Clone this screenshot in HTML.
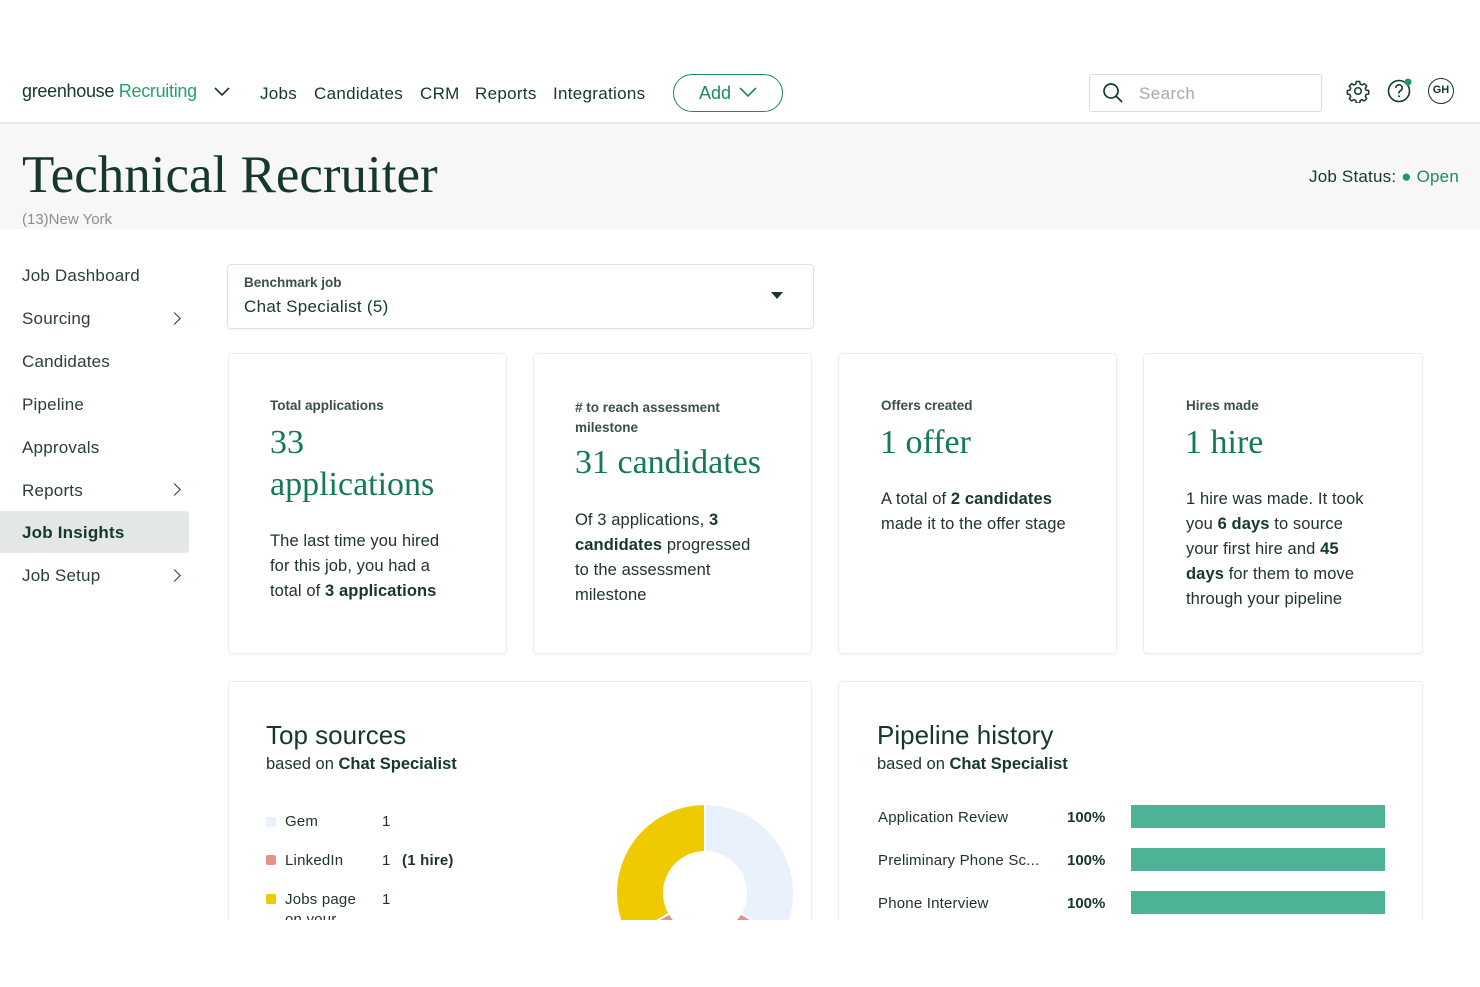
<!DOCTYPE html>
<html><head><meta charset="utf-8"><style>
*{margin:0;padding:0;box-sizing:border-box}
body{width:1480px;height:987px;background:#fff;font-family:"Liberation Sans",sans-serif;color:#15372c;position:relative;overflow:hidden}
.a{position:absolute;white-space:nowrap}
.serif{font-family:"Liberation Serif",serif}
.nav{font-size:17px;color:#15372c;top:84px;letter-spacing:.3px}
.side{left:22px;font-size:17px;color:#2c3e36;letter-spacing:.2px}
.chev{position:absolute;left:170px;width:9px;height:9px;border-right:1.8px solid #2c3e36;border-top:1.8px solid #2c3e36;transform:rotate(45deg)}
.card{position:absolute;background:#fff;border:1px solid #ececec;border-radius:4px;box-shadow:0 1px 2px rgba(0,0,0,.04)}
.lbl{font-size:13.5px;font-weight:bold;color:#3d4f47}
.big{font-family:"Liberation Serif",serif;font-size:34px;color:#137a52;line-height:42px}
.txt{font-size:16.5px;line-height:25px;color:#22332c;letter-spacing:.1px}
b{font-weight:bold;color:#15372c}
.bar{position:absolute;left:1131px;width:254px;height:23px;background:#4db396}
.pl{font-size:15px;color:#22332c;letter-spacing:.2px}
.pp{font-size:15px;font-weight:bold;left:1067px}
</style></head><body>
<div class="a" style="left:22px;top:81px;font-size:18px;color:#15372c;letter-spacing:-.3px">greenhouse <span style="color:#27a06f">Recruiting</span></div>
<svg class="a" style="left:213px;top:86px" width="18" height="12"><path d="M2 2l7 7 7-7" fill="none" stroke="#15372c" stroke-width="1.6"/></svg>
<div class="a nav" style="left:260px">Jobs</div>
<div class="a nav" style="left:314px">Candidates</div>
<div class="a nav" style="left:420px">CRM</div>
<div class="a nav" style="left:475px">Reports</div>
<div class="a nav" style="left:553px">Integrations</div>
<div class="a" style="left:673px;top:74px;width:110px;height:38px;border:1.5px solid #1e8a5e;border-radius:19px"></div>
<div class="a" style="left:699px;top:83px;font-size:18px;color:#1e8a5e">Add</div>
<svg class="a" style="left:738px;top:86px" width="20" height="12"><path d="M2 2l8 8 8-8" fill="none" stroke="#1e8a5e" stroke-width="1.6"/></svg>
<div class="a" style="left:1089px;top:74px;width:233px;height:38px;border:1px solid #dcdcdc;border-radius:3px"></div>
<svg class="a" style="left:1102px;top:82px" width="22" height="22"><circle cx="9" cy="9" r="7" fill="none" stroke="#15372c" stroke-width="1.7"/><path d="M14 14l6 6" stroke="#15372c" stroke-width="1.7"/></svg>
<div class="a" style="left:1139px;top:84px;font-size:17px;color:#a8aaa9;letter-spacing:.4px">Search</div>
<svg class="a" style="left:1346px;top:79px" width="24" height="24" viewBox="0 0 24 24"><path d="M10.3 2.5h3.4l.5 2.6 1.8.9 2.3-1.4 2.4 2.4-1.4 2.3.8 1.8 2.6.5v3.4l-2.6.5-.8 1.8 1.4 2.3-2.4 2.4-2.3-1.4-1.8.8-.5 2.6h-3.4l-.5-2.6-1.8-.8-2.3 1.4-2.4-2.4 1.4-2.3-.8-1.8-2.6-.5v-3.4l2.6-.5.8-1.8-1.4-2.3 2.4-2.4 2.3 1.4 1.8-.9z" fill="none" stroke="#15372c" stroke-width="1.5" stroke-linejoin="round"/><circle cx="12" cy="12" r="3.3" fill="none" stroke="#15372c" stroke-width="1.5"/></svg>
<svg class="a" style="left:1387px;top:77px" width="28" height="28"><circle cx="12" cy="14" r="10.5" fill="none" stroke="#15372c" stroke-width="1.6"/><path d="M8.8 11a3.2 3.2 0 1 1 4.5 2.9c-.9.4-1.3 1-1.3 2v.6" fill="none" stroke="#15372c" stroke-width="1.6"/><circle cx="12" cy="19.3" r="1" fill="#15372c"/><circle cx="21" cy="5" r="3.5" fill="#1e9a66"/></svg>
<div class="a" style="left:1428px;top:78px;width:26px;height:26px;border:1.6px solid #15372c;border-radius:50%;font-size:11px;font-weight:bold;text-align:center;line-height:23px">GH</div>
<div class="a" style="left:0;top:122px;width:1480px;height:2px;background:#e8e8e8"></div>
<div class="a" style="left:0;top:124px;width:1480px;height:105px;background:#f6f7f6"></div>
<div class="a serif" style="left:22px;top:145px;font-size:53px;color:#15372c">Technical Recruiter</div>
<div class="a" style="left:22px;top:211px;font-size:15px;color:#8a8f8c">(13)New York</div>
<div class="a" style="left:1309px;top:167px;font-size:17px;color:#15372c;letter-spacing:.2px">Job Status: <span style="color:#1e9a66">●</span> <span style="color:#1e8a5e">Open</span></div>
<div class="a side" style="top:266px">Job Dashboard</div>
<div class="a side" style="top:309px">Sourcing</div><div class="chev" style="top:314px"></div>
<div class="a side" style="top:352px">Candidates</div>
<div class="a side" style="top:395px">Pipeline</div>
<div class="a side" style="top:438px">Approvals</div>
<div class="a side" style="top:481px">Reports</div><div class="chev" style="top:485px"></div>
<div class="a" style="left:0;top:511px;width:189px;height:42px;background:#e3e8e5;border-radius:0 4px 4px 0"></div>
<div class="a side" style="top:523px;font-weight:bold;color:#15372c">Job Insights</div>
<div class="a side" style="top:566px">Job Setup</div><div class="chev" style="top:571px"></div>
<div class="card" style="left:227px;top:264px;width:587px;height:65px;border-color:#e2e2e2"></div>
<div class="a" style="left:244px;top:275px;font-size:13.5px;font-weight:bold;color:#3d4f47">Benchmark job</div>
<div class="a" style="left:244px;top:297px;font-size:17px;color:#15372c;letter-spacing:.3px">Chat Specialist (5)</div>
<div class="a" style="left:771px;top:292px;width:0;height:0;border-left:6px solid transparent;border-right:6px solid transparent;border-top:7px solid #15372c"></div>
<div class="card" style="left:228px;top:353px;width:279px;height:301px"></div>
<div class="card" style="left:533px;top:353px;width:279px;height:301px"></div>
<div class="card" style="left:838px;top:353px;width:279px;height:301px"></div>
<div class="card" style="left:1143px;top:353px;width:280px;height:301px"></div>
<div class="a lbl" style="left:270px;top:398px">Total applications</div>
<div class="a big" style="left:270px;top:422px">33<br>applications</div>
<div class="a txt" style="left:270px;top:529px">The last time you hired<br>for this job, you had a<br>total of <b>3 applications</b></div>
<div class="a lbl" style="left:575px;top:398px;line-height:20px"># to reach assessment<br>milestone</div>
<div class="a big" style="left:575px;top:442px">31 candidates</div>
<div class="a txt" style="left:575px;top:508px">Of 3 applications, <b>3</b><br><b>candidates</b> progressed<br>to the assessment<br>milestone</div>
<div class="a lbl" style="left:881px;top:398px">Offers created</div>
<div class="a big" style="left:880px;top:422px">1 offer</div>
<div class="a txt" style="left:881px;top:487px">A total of <b>2 candidates</b><br>made it to the offer stage</div>
<div class="a lbl" style="left:1186px;top:398px">Hires made</div>
<div class="a big" style="left:1185px;top:422px">1 hire</div>
<div class="a txt" style="left:1186px;top:487px">1 hire was made. It took<br>you <b>6 days</b> to source<br>your first hire and <b>45</b><br><b>days</b> for them to move<br>through your pipeline</div>
<div class="card" style="left:228px;top:681px;width:584px;height:260px;overflow:hidden">
<svg style="position:absolute;left:386px;top:121px" width="180" height="180" viewBox="-90 -90 180 180">
<path d="M0 -88A88 88 0 0 1 76.2 44L36.4 21A42 42 0 0 0 0 -42Z" fill="#e9f1fd"/>
<path d="M76.2 44A88 88 0 0 1 -76.2 44L-36.4 21A42 42 0 0 0 36.4 21Z" fill="#e8918a"/>
<path d="M-76.2 44A88 88 0 0 1 0 -88L0 -42A42 42 0 0 0 -36.4 21Z" fill="#f0ca00"/>
<path d="M0 -88V-42M76.2 44L36.4 21M-76.2 44L-36.4 21" stroke="#fff" stroke-width="2"/>
</svg>
</div>
<div class="card" style="left:838px;top:681px;width:585px;height:260px"></div>
<div class="a" style="left:0;top:920px;width:1480px;height:67px;background:#fff"></div>
<div class="a" style="left:266px;top:720px;font-size:26px;color:#15372c">Top sources</div>
<div class="a" style="left:266px;top:755px;font-size:16.5px;color:#22332c">based on <b>Chat Specialist</b></div>
<div class="a" style="left:266px;top:817px;width:10px;height:10px;background:#e9f1fd;border-radius:2px"></div>
<div class="a" style="left:266px;top:855px;width:10px;height:10px;background:#e8918a;border-radius:2px"></div>
<div class="a" style="left:266px;top:894px;width:10px;height:10px;background:#f0ca00;border-radius:2px"></div>
<div class="a pl" style="left:285px;top:813px">Gem</div><div class="a pl" style="left:382px;top:813px">1</div>
<div class="a pl" style="left:285px;top:852px">LinkedIn</div><div class="a pl" style="left:382px;top:852px">1</div><div class="a pl" style="left:402px;top:852px;font-weight:bold">(1 hire)</div>
<div class="a pl" style="left:285px;top:891px">Jobs page</div><div class="a pl" style="left:382px;top:891px">1</div>
<div class="a pl" style="left:285px;top:911px;height:9px;overflow:hidden">on your</div>
<div class="a" style="left:877px;top:720px;font-size:26px;color:#15372c">Pipeline history</div>
<div class="a" style="left:877px;top:755px;font-size:16.5px;color:#22332c">based on <b>Chat Specialist</b></div>
<div class="a pl" style="left:878px;top:809px">Application Review</div><div class="a pp" style="top:809px">100%</div><div class="bar" style="top:805px"></div>
<div class="a pl" style="left:878px;top:852px">Preliminary Phone Sc...</div><div class="a pp" style="top:852px">100%</div><div class="bar" style="top:848px"></div>
<div class="a pl" style="left:878px;top:895px">Phone Interview</div><div class="a pp" style="top:895px">100%</div><div class="bar" style="top:891px"></div>
</body></html>
